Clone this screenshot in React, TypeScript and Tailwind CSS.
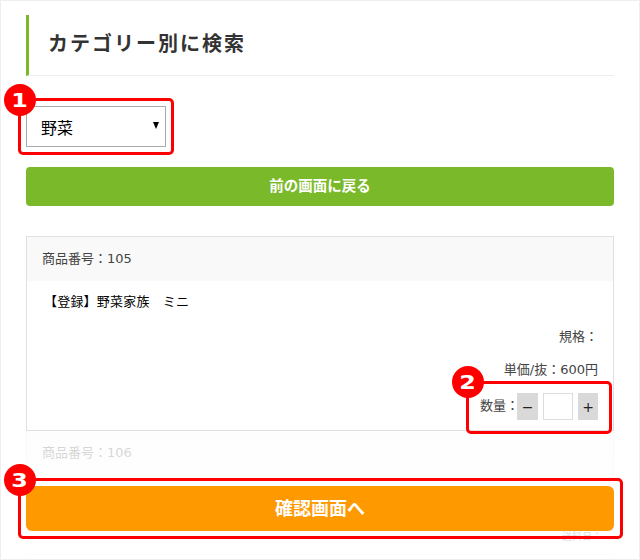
const Marker = ({ n, className }: { n: string; className: string }) => (
  <div
    className={
      "absolute w-8 h-8 rounded-full bg-[#ff0000] text-white flex items-center justify-center text-[19px] leading-none font-bold " +
      className
    }
  >
    <span className="inline-block scale-x-125">{n}</span>
  </div>
);

const Frame = ({ className }: { className: string }) => (
  <div className={"absolute border-[3px] border-[#ff0000] rounded-[5px] " + className} />
);

export default function App() {
  return (
    <div className="relative w-[640px] h-[560px] overflow-hidden bg-white border border-[#eeeeee] px-[25px] pt-[14px] font-['DejaVu_Sans','Noto_Sans_CJK_JP',sans-serif]">
      <h2 className="h-[61px] flex items-center pl-[19px] pb-[3px] border-l-[3px] border-l-[#7ab929] border-b border-b-[#eeeeee] text-[20px] font-bold text-[#333333] tracking-[2px]">
        カテゴリー別に検索
      </h2>

      <div className="relative mt-[30px] w-[140px] h-[41px] border border-[#aaaaaa] bg-white flex items-center pl-[14px] pt-[4px] text-base font-normal text-black">
        野菜
        <span className="absolute right-[6px] top-[15px] w-0 h-0 border-x-[3.5px] border-x-transparent border-t-[7px] border-t-black" />
      </div>

      <button className="mt-[20px] w-full h-[39px] rounded-[4px] bg-[#7ab929] text-white text-[14.5px] font-bold flex items-center justify-center">
        前の画面に戻る
      </button>

      <div className="mt-[30px] w-[588px] border border-[#e0e0e0] text-[13px] text-[#444444]">
        <div className="h-[44px] bg-[#f9f9f9] flex items-center px-[15px]">商品番号：105</div>
        <div className="h-[149px] bg-white flex flex-col px-[15px]">
          <p className="mt-[10px] pl-[2px] font-normal text-black h-[22px] leading-[22px] tracking-[0.2px]">【登録】野菜家族　ミニ</p>
          <p className="mt-[14px] text-right h-[20px] leading-[20px]">規格：</p>
          <p className="mt-[13px] text-right h-[20px] leading-[20px]">単価/抜：600円</p>
          <div className="mt-[13px] flex items-center justify-end">
            <span className="mr-[-2px] mb-[2px]">数量：</span>
            <span className="w-[21px] h-[27px] bg-[#d9d9d9] flex items-center justify-center text-sm text-[#222222]">−</span>
            <span className="ml-[5px] w-[30px] h-[27px] border border-[#dddddd] bg-white" />
            <span className="ml-[5px] w-[20px] h-[27px] bg-[#d9d9d9] flex items-center justify-center text-sm text-[#222222]">+</span>
          </div>
        </div>
        <div className="h-[44px] bg-[#f9f9f9] flex items-center px-[15px] border-t border-[#e0e0e0]">商品番号：106</div>
        <div className="h-[80px]" />
      </div>

      {/* fade over the list, fixed footer */}
      <div className="absolute left-[25px] right-0 top-[430px] bottom-0 bg-gradient-to-b from-white/75 to-white/95" />
      <div className="absolute left-[25px] top-[485px] w-[588px] h-[45px] rounded-[6px] bg-[#ff9900] text-white text-[18px] font-bold flex items-center justify-center">
        確認画面へ
      </div>
      <span className="absolute left-[561px] top-[530px] text-[10px] leading-[12px] text-[#dddddd]">送料日：</span>

      <Frame className="left-[17px] top-[97px] w-[156px] h-[57px]" />
      <Frame className="left-[465px] top-[380px] w-[146px] h-[53px]" />
      <Frame className="left-[17px] top-[477px] w-[605px] h-[61px]" />
      <Marker n="1" className="left-[3px] top-[83px]" />
      <Marker n="2" className="left-[451px] top-[365px]" />
      <Marker n="3" className="left-[3px] top-[463px]" />
    </div>
  );
}
